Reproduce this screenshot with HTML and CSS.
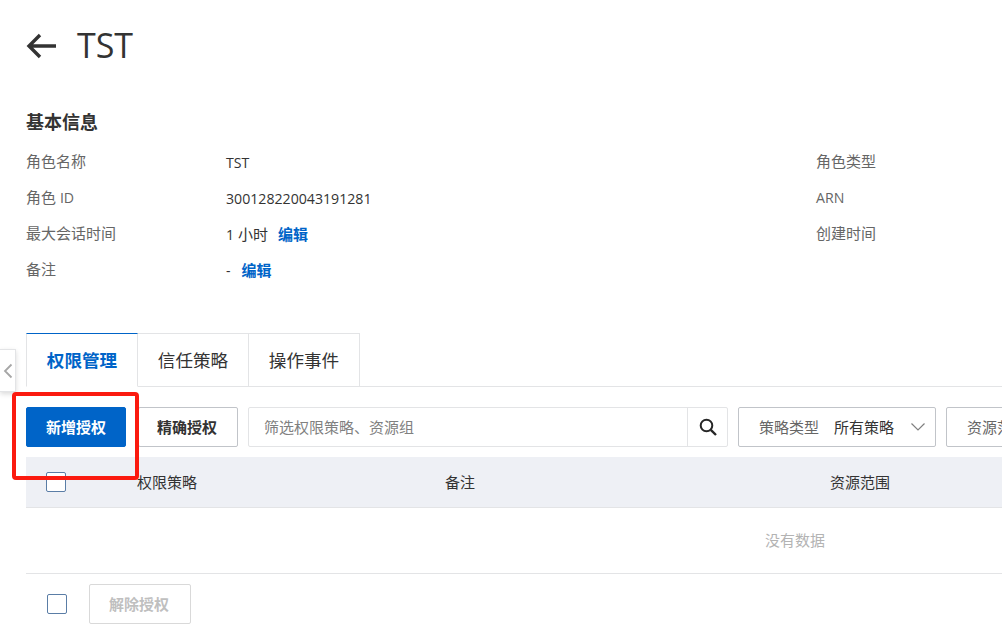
FILE: index.html
```html
<!DOCTYPE html>
<html lang="en">
<head>
  <meta charset="UTF-8">
  <meta name="viewport" content="width=device-width, initial-scale=1.0">
  <title>TST</title>
  <link rel="stylesheet" href="styles.css">
</head>
<body>
  <div class="page">
    <div class="title-row">
      <svg class="back" width="32" height="26" viewBox="0 0 32 26"><path d="M30 13H3.5M14 2 3 13l11 11" fill="none" stroke="#333" stroke-width="3.4"/></svg>
      <h1>TST</h1>
    </div>

    <h2>基本信息</h2>
    <div class="info">
      <div class="info-row"><span class="label">角色名称</span><span class="value"><span class="latin">TST</span></span><span class="label">角色类型</span></div>
      <div class="info-row"><span class="label">角色 <span class="latin">ID</span></span><span class="value"><span class="latin">300128220043191281</span></span><span class="label"><span class="latin">ARN</span></span></div>
      <div class="info-row"><span class="label">最大会话时间</span><span class="value"><span class="latin">1</span> 小时<a class="edit">编辑</a></span><span class="label">创建时间</span></div>
      <div class="info-row"><span class="label">备注</span><span class="value"><span class="latin dash">-</span><a class="edit">编辑</a></span></div>
    </div>

    <div class="tabs">
      <div class="tab active">权限管理</div>
      <div class="tab">信任策略</div>
      <div class="tab">操作事件</div>
    </div>

    <div class="toolbar">
      <button class="btn primary">新增授权</button>
      <button class="btn">精确授权</button>
      <div class="search">
        <span class="search-text">筛选权限策略、资源组</span>
        <span class="search-btn">
          <svg width="18" height="18" viewBox="0 0 18 18"><circle cx="7.5" cy="7.5" r="5.8" fill="none" stroke="#262626" stroke-width="2"/><path d="M11.8 11.8 17 17" stroke="#262626" stroke-width="2.4"/></svg>
        </span>
      </div>
      <div class="select">
        <span>策略类型</span><span class="select-value">所有策略</span>
        <svg class="chevron" width="14" height="8" viewBox="0 0 14 8"><path d="M.5.5 7 7l6.5-6.5" fill="none" stroke="#808080" stroke-width="1.2"/></svg>
      </div>
      <div class="select">
        <span>资源范围</span><span class="select-value">所有资源</span>
      </div>
    </div>

    <div class="table">
      <div class="thead">
        <span class="check-cell"><span class="check"></span></span>
        <span class="th">权限策略</span>
        <span class="th">备注</span>
        <span class="th">资源范围</span>
      </div>
      <div class="empty">没有数据</div>
    </div>

    <div class="footer">
      <span class="check"></span>
      <button class="btn disabled">解除授权</button>
    </div>
  </div>

  <div class="side-handle">
    <svg width="10" height="16" viewBox="0 0 10 16"><path d="M8.5 1.5 2 8l6.5 6.5" fill="none" stroke="#a6a6a6" stroke-width="1.8"/></svg>
  </div>
  <div class="highlight"></div>
</body>
</html>
```

FILE: styles.css
```css
html, body {
  height: 100%;
}
body {
  margin: 0;
  overflow: hidden;
  background: #fff;
  color: #333;
  font-family: "Open Sans", "Noto Sans CJK SC", sans-serif;
  font-size: 15px;
}
.latin {
  font-size: 14.15px;
}
.page {
  width: 1540px;
  padding: 24px 0 0 26px;
}
.title-row {
  display: flex;
  align-items: center;
  gap: 19px;
  height: 44px;
}
.back {
  flex: none;
}
h1 {
  margin: 0;
  padding-bottom: 2px;
  font-size: 34px;
  font-weight: 500;
  line-height: 44px;
  color: #333;
}
h2 {
  margin: 41px 0 0;
  font-size: 18px;
  font-weight: 700;
  line-height: 26px;
  color: #333;
}
.info {
  margin-top: 9px;
}
.info-row {
  display: grid;
  grid-template-columns: 200px 590px 1fr;
  height: 36px;
  line-height: 36px;
}
.label {
  line-height: 34px;
  color: #666;
}
.value {
  color: #333;
}
.edit {
  margin-left: 10px;
  font-weight: 700;
  color: #0064c8;
}
.dash {
  margin-right: 1px;
}
.tabs {
  display: flex;
  margin-top: 45px;
  height: 54px;
  border-bottom: 1px solid #e3e4e6;
  box-sizing: border-box;
}
.tab {
  width: 111px;
  height: 54px;
  box-sizing: border-box;
  border: 1px solid #e3e4e6;
  border-left: 0;
  line-height: 52px;
  text-align: center;
  font-size: 17.6px;
  color: #333;
  background: #fff;
}
.tab:first-child {
  width: 112px;
  border-left: 1px solid #e3e4e6;
}
.tab.active {
  border-top: 1px solid #0064c8;
  border-bottom-color: #fff;
  font-weight: 700;
  color: #0064c8;
}
.toolbar {
  display: flex;
  gap: 10px;
  margin-top: 20px;
  height: 40px;
}
.btn {
  width: 100px;
  height: 40px;
  padding: 0 2px 2px 0;
  border: 1px solid #c1c4c9;
  border-radius: 2px;
  background: #fff;
  color: #333;
  font-family: inherit;
  font-size: 15px;
  font-weight: 700;
}
.btn.primary {
  margin-right: 2px;
  padding-right: 0;
  border-color: #0064c8;
  background: #0064c8;
  color: #fff;
}
.btn.disabled {
  width: 102px;
  border-color: #d9d9d9;
  color: #bfbfbf;
}
.search {
  display: flex;
  width: 480px;
  height: 40px;
  box-sizing: border-box;
  border: 1px solid #e3e4e6;
  border-radius: 2px;
}
.search-text {
  flex: 1;
  padding-left: 15px;
  line-height: 38px;
  color: #808080;
}
.search-btn {
  display: flex;
  align-items: center;
  justify-content: center;
  width: 39px;
  border-left: 1px solid #e3e4e6;
}
.select {
  display: flex;
  align-items: center;
  flex: none;
  width: 198px;
  height: 40px;
  box-sizing: border-box;
  padding: 0 10px 2px 20px;
  border: 1px solid #c1c4c9;
  border-radius: 2px;
  color: #666;
}
.select-value {
  margin: 0 auto 0 15px;
  color: #333;
}
.chevron {
  margin-top: 2px;
}
.table {
  margin-top: 10px;
  border-bottom: 1px solid #e3e4e6;
}
.thead {
  display: grid;
  grid-template-columns: 111px 308px 385px 1fr;
  align-items: center;
  height: 50px;
  border-bottom: 1px solid #e3e4e6;
  background: #eef0f5;
  color: #333;
}
.th {
  padding-bottom: 2px;
}
.check-cell {
  display: flex;
  padding-left: 20px;
}
.check {
  display: block;
  width: 20px;
  height: 20px;
  box-sizing: border-box;
  border: 1px solid #5a7da6;
  border-radius: 2px;
  background: #fff;
}
.empty {
  height: 65px;
  padding-right: 2px;
  line-height: 65px;
  text-align: center;
  color: #b3b3b3;
}
.footer {
  display: flex;
  align-items: center;
  gap: 22px;
  margin-top: 10px;
  padding-left: 21px;
}
.side-handle {
  position: absolute;
  left: 0;
  top: 349px;
  display: flex;
  align-items: center;
  justify-content: center;
  width: 15px;
  height: 41px;
  border: 1px solid #e3e4e6;
  border-left: 0;
  background: #fff;
  box-shadow: 0 2px 5px rgba(0, 0, 0, 0.15);
}
.highlight {
  position: absolute;
  left: 12px;
  top: 392px;
  width: 127px;
  height: 88px;
  box-sizing: border-box;
  border: 4px solid #fb1a0f;
  border-radius: 4px;
}
```
